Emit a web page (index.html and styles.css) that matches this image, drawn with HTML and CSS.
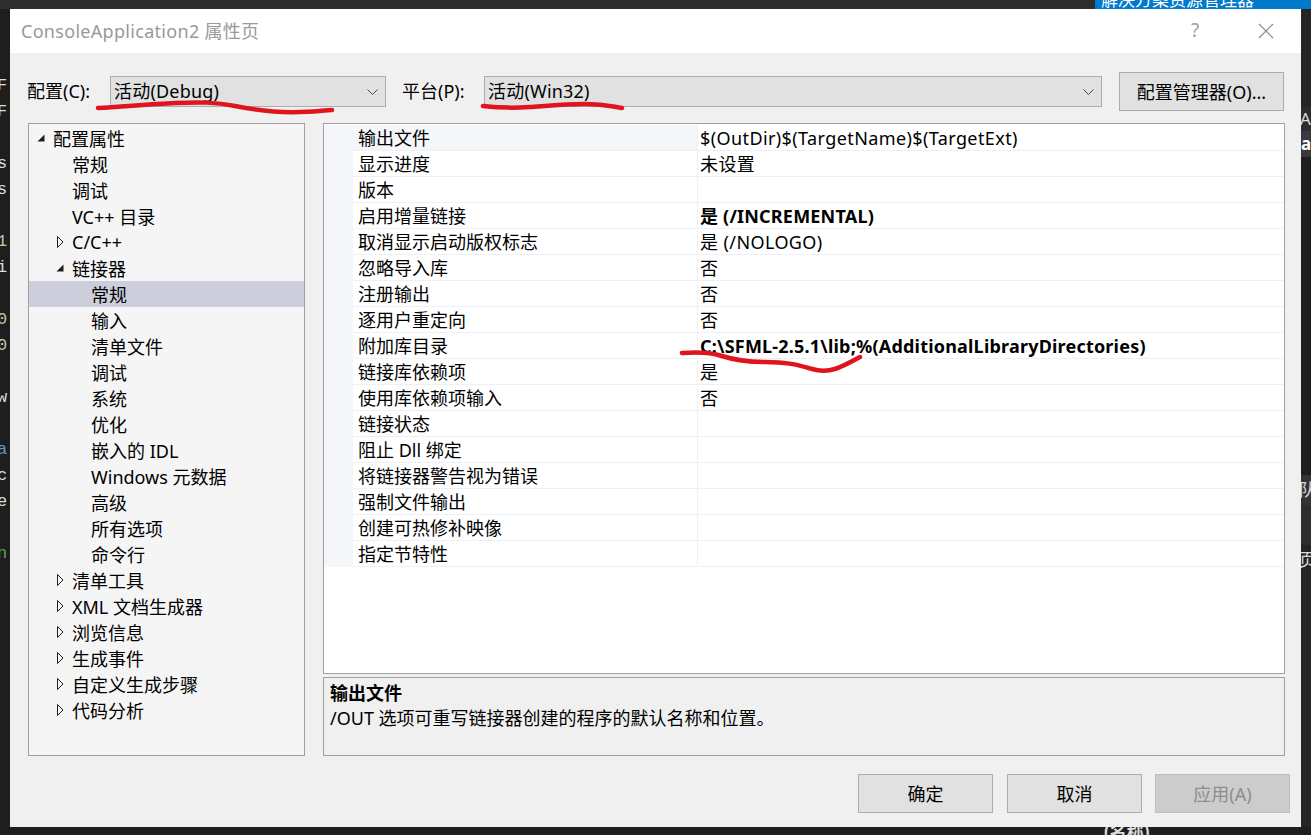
FILE: index.html
```html
<!DOCTYPE html>
<html lang="zh-CN">
<head>
<meta charset="utf-8">
<title>ConsoleApplication2 属性页</title>
<link rel="stylesheet" href="styles.css">
</head>
<body>
<div class="desk">
  <div class="top-strip">
    <div class="top-spacer"></div>
    <div class="top-blue">解决方案资源管理器</div>
  </div>
  <div class="mid">
    <div class="left-strip">
      <div class="code w">F</div>
      <div class="code w">F</div>
      <div class="code"></div>
      <div class="code w">s</div>
      <div class="code w">s</div>
      <div class="code"></div>
      <div class="code n">1</div>
      <div class="code w">i</div>
      <div class="code"></div>
      <div class="code n">0</div>
      <div class="code n">0</div>
      <div class="code"></div>
      <div class="code w">w</div>
      <div class="code"></div>
      <div class="code b">a</div>
      <div class="code w">c</div>
      <div class="code w">e</div>
      <div class="code"></div>
      <div class="code g">n</div>
    </div>

    <div class="dialog">
      <div class="titlebar">
        <span class="title">ConsoleApplication2 属性页</span>
        <span class="help">?</span>
        <svg class="close" width="16" height="16" viewBox="0 0 16 16"><path d="M1 1 L15 15 M15 1 L1 15" stroke="#8a8a8a" stroke-width="1.2" fill="none"/></svg>
      </div>

      <div class="toolbar">
        <span class="lbl lbl1">配置(C):</span>
        <div class="combo combo1"><span>活动(Debug)</span><svg class="chev" width="11" height="7" viewBox="0 0 11 7"><path d="M0.5 0.5 L5.5 5.5 L10.5 0.5" stroke="#444" stroke-width="1" fill="none"/></svg></div>
        <span class="lbl lbl2">平台(P):</span>
        <div class="combo combo2"><span>活动(Win32)</span><svg class="chev" width="11" height="7" viewBox="0 0 11 7"><path d="M0.5 0.5 L5.5 5.5 L10.5 0.5" stroke="#444" stroke-width="1" fill="none"/></svg></div>
        <button class="btn mgr">配置管理器(O)...</button>
      </div>

      <div class="main">
        <div class="tree">
          <div class="node l0"><span class="tw"><svg width="8" height="8" viewBox="0 0 8 8"><polygon points="7.5,0.5 7.5,7.5 0.5,7.5" fill="#1e1e1e"/></svg></span>配置属性</div>
          <div class="node l1"><span class="tw"></span>常规</div>
          <div class="node l1"><span class="tw"></span>调试</div>
          <div class="node l1"><span class="tw"></span>VC++ 目录</div>
          <div class="node l1"><span class="tw"><svg class="col" width="7" height="12" viewBox="0 0 7 12"><polygon points="0.5,0.5 6,6 0.5,11.5" fill="none" stroke="#1e1e1e" stroke-width="1"/></svg></span>C/C++</div>
          <div class="node l1"><span class="tw"><svg width="8" height="8" viewBox="0 0 8 8"><polygon points="7.5,0.5 7.5,7.5 0.5,7.5" fill="#1e1e1e"/></svg></span>链接器</div>
          <div class="node l2 sel"><span class="tw"></span>常规</div>
          <div class="node l2"><span class="tw"></span>输入</div>
          <div class="node l2"><span class="tw"></span>清单文件</div>
          <div class="node l2"><span class="tw"></span>调试</div>
          <div class="node l2"><span class="tw"></span>系统</div>
          <div class="node l2"><span class="tw"></span>优化</div>
          <div class="node l2"><span class="tw"></span>嵌入的 IDL</div>
          <div class="node l2"><span class="tw"></span>Windows 元数据</div>
          <div class="node l2"><span class="tw"></span>高级</div>
          <div class="node l2"><span class="tw"></span>所有选项</div>
          <div class="node l2"><span class="tw"></span>命令行</div>
          <div class="node l1"><span class="tw"><svg class="col" width="7" height="12" viewBox="0 0 7 12"><polygon points="0.5,0.5 6,6 0.5,11.5" fill="none" stroke="#1e1e1e" stroke-width="1"/></svg></span>清单工具</div>
          <div class="node l1"><span class="tw"><svg class="col" width="7" height="12" viewBox="0 0 7 12"><polygon points="0.5,0.5 6,6 0.5,11.5" fill="none" stroke="#1e1e1e" stroke-width="1"/></svg></span>XML 文档生成器</div>
          <div class="node l1"><span class="tw"><svg class="col" width="7" height="12" viewBox="0 0 7 12"><polygon points="0.5,0.5 6,6 0.5,11.5" fill="none" stroke="#1e1e1e" stroke-width="1"/></svg></span>浏览信息</div>
          <div class="node l1"><span class="tw"><svg class="col" width="7" height="12" viewBox="0 0 7 12"><polygon points="0.5,0.5 6,6 0.5,11.5" fill="none" stroke="#1e1e1e" stroke-width="1"/></svg></span>生成事件</div>
          <div class="node l1"><span class="tw"><svg class="col" width="7" height="12" viewBox="0 0 7 12"><polygon points="0.5,0.5 6,6 0.5,11.5" fill="none" stroke="#1e1e1e" stroke-width="1"/></svg></span>自定义生成步骤</div>
          <div class="node l1"><span class="tw"><svg class="col" width="7" height="12" viewBox="0 0 7 12"><polygon points="0.5,0.5 6,6 0.5,11.5" fill="none" stroke="#1e1e1e" stroke-width="1"/></svg></span>代码分析</div>
        </div>

        <div class="right">
          <div class="grid">
            <div class="row cur"><span class="m"></span><span class="k">输出文件</span><span class="v">$(OutDir)$(TargetName)$(TargetExt)</span></div>
            <div class="row"><span class="m"></span><span class="k">显示进度</span><span class="v">未设置</span></div>
            <div class="row"><span class="m"></span><span class="k">版本</span><span class="v"></span></div>
            <div class="row"><span class="m"></span><span class="k">启用增量链接</span><span class="v bold">是 (/INCREMENTAL)</span></div>
            <div class="row"><span class="m"></span><span class="k">取消显示启动版权标志</span><span class="v">是 (/NOLOGO)</span></div>
            <div class="row"><span class="m"></span><span class="k">忽略导入库</span><span class="v">否</span></div>
            <div class="row"><span class="m"></span><span class="k">注册输出</span><span class="v">否</span></div>
            <div class="row"><span class="m"></span><span class="k">逐用户重定向</span><span class="v">否</span></div>
            <div class="row"><span class="m"></span><span class="k">附加库目录</span><span class="v bold">C:\SFML-2.5.1\lib;%(AdditionalLibraryDirectories)</span></div>
            <div class="row"><span class="m"></span><span class="k">链接库依赖项</span><span class="v">是</span></div>
            <div class="row"><span class="m"></span><span class="k">使用库依赖项输入</span><span class="v">否</span></div>
            <div class="row"><span class="m"></span><span class="k">链接状态</span><span class="v"></span></div>
            <div class="row"><span class="m"></span><span class="k">阻止 Dll 绑定</span><span class="v"></span></div>
            <div class="row"><span class="m"></span><span class="k">将链接器警告视为错误</span><span class="v"></span></div>
            <div class="row"><span class="m"></span><span class="k">强制文件输出</span><span class="v"></span></div>
            <div class="row"><span class="m"></span><span class="k">创建可热修补映像</span><span class="v"></span></div>
            <div class="row"><span class="m"></span><span class="k">指定节特性</span><span class="v"></span></div>
          </div>
          <div class="desc">
            <div class="desc-title">输出文件</div>
            <div class="desc-text">/OUT 选项可重写链接器创建的程序的默认名称和位置。</div>
          </div>
        </div>
      </div>

      <div class="footer">
        <button class="btn ok">确定</button>
        <button class="btn cancel">取消</button>
        <button class="btn apply" disabled>应用(A)</button>
      </div>
    </div>

    <div class="right-strip">
      <div class="rs-a">Ap</div>
      <div class="rs-b">a</div>
      <div class="rs-dark"></div>
      <div class="rs-c">队</div>
      <div class="rs-d"></div>
      <div class="rs-e">页</div>
    </div>
  </div>
  <div class="bottom-strip"><span class="bs-text">(名称)</span></div>
</div>

<svg class="ink" width="1311" height="835" viewBox="0 0 1311 835">
  <path d="M98 108 C 120 107, 150 104, 175 103 S 215 102, 235 106 S 275 113, 300 112 S 325 110, 332 110" stroke="#e0141c" stroke-width="4.5" fill="none" stroke-linecap="round"/>
  <path d="M483 106 C 500 108, 515 108, 530 107 S 565 104, 585 104 S 610 106, 622 108" stroke="#e0141c" stroke-width="4.5" fill="none" stroke-linecap="round"/>
  <path d="M682 353 C 695 352, 710 352, 722 356 S 745 362, 765 362 S 795 364, 812 369 S 840 368, 860 357" stroke="#e0141c" stroke-width="4.5" fill="none" stroke-linecap="round"/>
</svg>
</body>
</html>
```
FILE: styles.css
```css
* { box-sizing: border-box; }

body {
  margin: 0;
  width: 1311px;
  height: 835px;
  overflow: hidden;
  background: #252526;
  font-family: "Noto Sans", "Noto Sans CJK SC", sans-serif;
  font-size: 18px;
  color: #000;
  position: relative;
}

.desk { display: flex; flex-direction: column; height: 835px; }

.top-strip { height: 9px; display: flex; overflow: hidden; background: #2d2d30; }
.top-spacer { flex: 1; }
.top-blue {
  width: 216px;
  background: #007acc;
  color: #fff;
  font-size: 17px;
  line-height: 17px;
  padding-left: 6px;
  margin-top: -9px;
}

.mid { display: flex; height: 818px; }

.left-strip {
  width: 10px;
  overflow: hidden;
  background: #1e1e1e;
  padding-top: 64px;
  font-family: "Liberation Mono", monospace;
}
.code { height: 26px; line-height: 26px; font-size: 17px; margin-left: -3px; }
.code.w { color: #dcdcdc; }
.code.n { color: #b5cea8; }
.code.b { color: #569cd6; }
.code.g { color: #57a64a; }

.right-strip {
  width: 10px;
  overflow: hidden;
  background: #252526;
  display: flex;
  flex-direction: column;
  color: #dcdcdc;
}
.rs-a { margin-top: 98px; height: 24px; line-height: 24px; font-size: 17px; margin-left: -1px; background: #2d2d30; }
.rs-b { height: 26px; line-height: 26px; font-size: 17px; font-weight: bold; background: #3a3a3e; color: #fff; }
.rs-dark { height: 318px; background: #1e1e1e; }
.rs-c { height: 30px; line-height: 30px; font-size: 17px; margin-left: -2px; background: #333337; }
.rs-d { height: 40px; background: #2d2d30; }
.rs-e { height: 30px; line-height: 30px; font-size: 17px; margin-left: -2px; }

.bottom-strip { height: 8px; background: #1e1e1e; overflow: hidden; }
.bs-text { display: block; margin-left: 1104px; margin-top: -4px; font-size: 17px; line-height: 17px; color: #dcdcdc; font-weight: bold; }

/* Dialog */
.dialog {
  width: 1291px;
  height: 818px;
  background: #f0f0f0;
  display: flex;
  flex-direction: column;
}

.titlebar {
  height: 44px;
  background: #fff;
  display: flex;
  align-items: center;
  padding-left: 11px;
  padding-bottom: 3px;
  flex: none;
}
.title { color: #999; font-size: 18px; flex: 1; letter-spacing: 0.3px; }
.help { color: #a0a0a0; font-size: 19px; width: 12px; margin-right: 57px; margin-left: 2px; text-align: center; }
.close { margin-right: 27px; margin-top: 2px; }

.toolbar {
  margin-top: 19px;
  height: 39px;
  display: flex;
  align-items: center;
  padding-left: 17px;
  flex: none;
}
.lbl { font-size: 18px; padding-bottom: 3px; }
.lbl1 { width: 83px; }
.lbl2 { width: 82px; margin-left: 16px; }

.combo {
  height: 31px;
  background: #e1e1e1;
  border: 1px solid #adadad;
  display: flex;
  align-items: center;
  padding-left: 3px;
  padding-right: 7px;
}
.combo span { flex: 1; padding-bottom: 3px; letter-spacing: 0.2px; }
.combo1 { width: 276px; }
.combo2 { width: 618px; }
.chev { margin-top: 1px; }

.btn {
  font-family: "Noto Sans", "Noto Sans CJK SC", sans-serif;
  font-size: 18px;
  height: 39px;
  background: #e1e1e1;
  border: 1px solid #adadad;
  color: #000;
  padding: 0 0 1px 0;
}
.mgr { width: 165px; margin-left: 17px; }

.main {
  margin-top: 12px;
  display: flex;
  padding-left: 18px;
  flex: none;
  height: 633px;
}

.tree {
  width: 277px;
  height: 633px;
  border: 1px solid #a0a0a0;
  background: #f5f5f5;
  padding-top: 1px;
}
.node { height: 26px; display: flex; align-items: center; white-space: nowrap; }
.node.sel { background: #cccedb; }
.tw { width: 16px; height: 26px; display: flex; align-items: center; flex: none; }
.tw .col { margin-left: 1px; }
.l0 { padding-left: 8px; }
.l1 { padding-left: 27px; }
.l2 { padding-left: 46px; }

.right {
  margin-left: 18px;
  width: 962px;
  display: flex;
  flex-direction: column;
}

.grid {
  height: 551px;
  border: 1px solid #a0a0a0;
  background: #fff;
  padding-top: 1px;
}
.row {
  display: grid;
  grid-template-columns: 29px 344px 1fr;
  height: 26px;
}
.row .m { background: #f4f6fa; }
.row .k, .row .v {
  border-bottom: 1px solid #eef0f6;
  line-height: 25px;
  padding-top: 1px;
  white-space: nowrap;
  overflow: hidden;
}
.row .k { padding-left: 5px; }
.row .v { border-left: 1px solid #eef0f6; padding-left: 2px; letter-spacing: 0.4px; }
.row.cur .k { background: #f4f6fa; }
.bold { font-weight: bold; }
.row .v.bold { letter-spacing: 0.2px; }

.desc {
  margin-top: 3px;
  height: 79px;
  border: 1px solid #a0a0a0;
  background: #f0f0f0;
  padding: 3px 0 0 6px;
}
.desc-title { font-weight: bold; line-height: 25px; }
.desc-text { line-height: 25px; }

.footer {
  margin-top: 18px;
  height: 39px;
  display: flex;
  justify-content: flex-end;
  padding-right: 11px;
  flex: none;
}
.ok, .cancel, .apply { width: 135px; }
.cancel { margin-left: 14px; }
.apply { margin-left: 13px; background: #cccccc; border-color: #bfbfbf; color: #8d8d8d; }

.ink { position: absolute; left: 0; top: 0; pointer-events: none; }
```
